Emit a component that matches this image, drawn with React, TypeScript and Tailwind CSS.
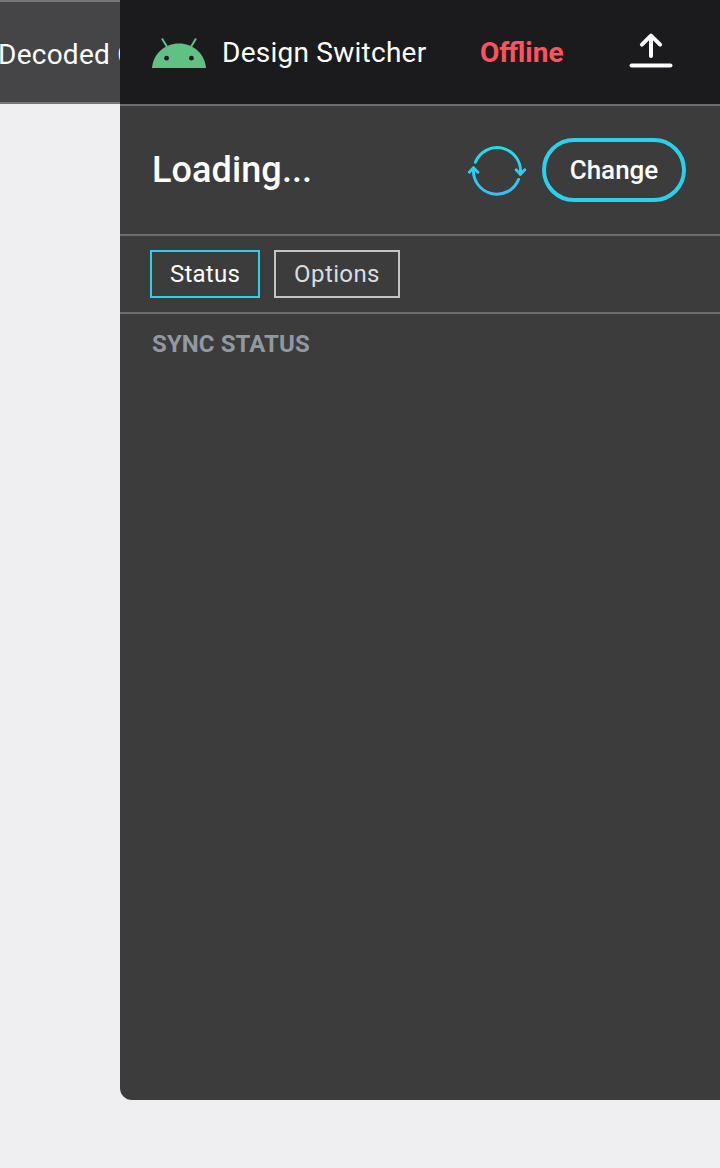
import React from "react";

function AndroidHead() {
  return (
    <svg width="54" height="32" viewBox="0 0 54 32" className="mt-[2px] shrink-0">
      <path d="M0 31C1.3 16.5 13 6.6 27 6.6C41 6.6 52.7 16.5 54 31Z" fill="#61c084" />
      <path d="M10 1.4L15.4 10.4M44 1.4L38.6 10.4" stroke="#61c084" strokeWidth="2" fill="none" />
      <circle cx="14.6" cy="21.2" r="2.4" fill="#1b1b1d" />
      <circle cx="39.4" cy="21.2" r="2.4" fill="#1b1b1d" />
    </svg>
  );
}

function UploadIcon() {
  return (
    <svg width="44" height="40" viewBox="0 0 44 40" fill="none" stroke="#fff" strokeLinecap="round" strokeLinejoin="round" className="mb-1 shrink-0">
      <path d="M22 26V6M12.9 14.6L22 5.6L31.1 14.6" strokeWidth="4" />
      <path d="M2.6 35.5H41.4" strokeWidth="4.2" />
    </svg>
  );
}

function SyncIcon() {
  return (
    <svg width="60" height="52" viewBox="0 0 60 52" fill="none" strokeWidth="2.9" strokeLinecap="round" strokeLinejoin="round" className="mt-[2px] shrink-0">
      <defs>
        <linearGradient id="sync" gradientUnits="userSpaceOnUse" x1="0" y1="2" x2="0" y2="50">
          <stop offset="0" stopColor="#1fe0e6" />
          <stop offset="1" stopColor="#3cbdf5" />
        </linearGradient>
      </defs>
      <g stroke="url(#sync)">
        <path d="M8.4 17.3A23.4 23.4 0 0 1 53.3 29.2" />
        <path d="M49.1 24.7L53.4 29.3L57.8 24.7" />
        <path d="M51.6 34.4A23.4 23.4 0 0 1 6.6 23" />
        <path d="M2.3 27.3L6.5 22.8L10.9 27.3" />
      </g>
    </svg>
  );
}

export default function App() {
  return (
    <div className="relative h-[1168px] w-[720px] overflow-hidden bg-[#efeff1] font-[Roboto,sans-serif]">
      <header className="flex h-[104px] items-center border-y-2 border-[#767678] bg-[#454547]">
        <span className="-ml-[2px] mt-[6px] whitespace-nowrap text-[28px] leading-8 tracking-[0.25px] text-white">
          Decoded Content
        </span>
      </header>

      <aside className="absolute top-0 right-0 flex h-[1100px] w-[600px] flex-col overflow-hidden rounded-bl-[12px] bg-[#3c3c3c]">
        <div className="flex h-[104px] shrink-0 items-center bg-[#1b1b1d] pl-8">
          <AndroidHead />
          <h1 className="mt-[2px] ml-4 w-[258px] whitespace-nowrap text-[28px] leading-8 tracking-[0.25px] text-white">
            Design Switcher
          </h1>
          <span className="mt-[2px] w-[149px] text-[28px] leading-8 font-bold text-[#ff515e]">Offline</span>
          <UploadIcon />
        </div>

        <div className="flex h-[130px] shrink-0 items-center border-t-2 border-[#6c6c6c] pr-[34px] pl-8">
          <h2 className="flex-1 text-[36px] leading-10 font-medium tracking-[0.1px] text-white">Loading...</h2>
          <SyncIcon />
          <button className="ml-[15px] h-16 w-36 rounded-full border-4 border-[#2bd1ea] text-[26px] leading-8 font-medium text-white">
            Change
          </button>
        </div>

        <nav className="flex h-[80px] shrink-0 items-center gap-[14px] border-y-2 border-[#6c6c6c] pl-[30px]">
          <button className="h-12 w-[110px] border-2 border-[#2bd1ea] text-[24px] leading-8 tracking-[0.25px] text-white">
            Status
          </button>
          <button className="h-12 w-[126px] border-2 border-[#c4c4c4] text-[24px] leading-8 tracking-[0.4px] text-[#dadce0]">
            Options
          </button>
        </nav>

        <h3 className="mt-[14px] pl-8 text-[24px] leading-8 font-bold tracking-[0.1px] text-[#9099a1]">SYNC STATUS</h3>
      </aside>
    </div>
  );
}
